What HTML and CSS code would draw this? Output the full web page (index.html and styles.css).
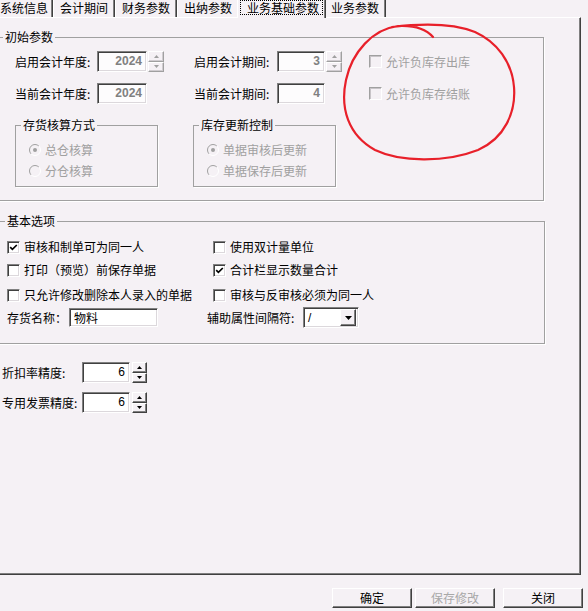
FILE: index.html
```html
<!DOCTYPE html>
<html lang="zh-CN">
<head>
<meta charset="utf-8">
<title>业务基础参数</title>
<link rel="stylesheet" href="styles.css">
</head>
<body>
<div class="tabs">
  <div class="tab first-tab">系统信息</div>
  <div class="tab">会计期间</div>
  <div class="tab">财务参数</div>
  <div class="tab">出纳参数</div>
  <div class="tab active"><span class="focus">业务基础参数</span></div>
  <div class="tab">业务参数</div>
</div>

<div class="panel">
  <div class="group g1">
    <span class="gtitle">初始参数</span>
    <div class="irow">
      <span class="lbl w-lbl1">启用会计年度:</span>
      <span class="field num w-year">2024</span>
      <span class="spin dis ml1"><span class="sb"><svg width="5" height="3" viewBox="0 0 5 3"><path d="M2.5 0L5 3H0Z"/></svg></span><span class="sb"><svg width="5" height="3" viewBox="0 0 5 3"><path d="M0 0H5L2.5 3Z"/></svg></span></span>
      <span class="lbl w-lbl2 ml30">启用会计期间:</span>
      <span class="field num w-per">3</span>
      <span class="spin dis ml1"><span class="sb"><svg width="5" height="3" viewBox="0 0 5 3"><path d="M2.5 0L5 3H0Z"/></svg></span><span class="sb"><svg width="5" height="3" viewBox="0 0 5 3"><path d="M0 0H5L2.5 3Z"/></svg></span></span>
      <span class="chk dis ml27"><span class="cb"></span>允许负库存出库</span>
    </div>
    <div class="irow">
      <span class="lbl w-lbl1">当前会计年度:</span>
      <span class="field num w-year">2024</span>
      <span class="spin-gap"></span>
      <span class="lbl w-lbl2 ml30">当前会计期间:</span>
      <span class="field num w-per">4</span>
      <span class="spin-gap"></span>
      <span class="chk dis ml27"><span class="cb"></span>允许负库存结账</span>
    </div>
    <div class="subs">
      <div class="sub">
        <span class="stitle">存货核算方式</span>
        <div class="radio"><svg class="rd" width="12" height="12" viewBox="0 0 12 12"><circle cx="6" cy="6" r="5" fill="#f5f1f5"/><path d="M2.1 9.9A5.5 5.5 0 0 1 9.9 2.1" fill="none" stroke="#a0a0a0"/><path d="M9.9 2.1A5.5 5.5 0 0 1 2.1 9.9" fill="none" stroke="#ffffff"/><circle cx="6" cy="6" r="2" fill="#a0a0a0"/></svg>总仓核算</div>
        <div class="radio"><svg class="rd" width="12" height="12" viewBox="0 0 12 12"><circle cx="6" cy="6" r="5" fill="#f5f1f5"/><path d="M2.1 9.9A5.5 5.5 0 0 1 9.9 2.1" fill="none" stroke="#a0a0a0"/><path d="M9.9 2.1A5.5 5.5 0 0 1 2.1 9.9" fill="none" stroke="#ffffff"/></svg>分仓核算</div>
      </div>
      <div class="sub">
        <span class="stitle">库存更新控制</span>
        <div class="radio"><svg class="rd" width="12" height="12" viewBox="0 0 12 12"><circle cx="6" cy="6" r="5" fill="#f5f1f5"/><path d="M2.1 9.9A5.5 5.5 0 0 1 9.9 2.1" fill="none" stroke="#a0a0a0"/><path d="M9.9 2.1A5.5 5.5 0 0 1 2.1 9.9" fill="none" stroke="#ffffff"/><circle cx="6" cy="6" r="2" fill="#a0a0a0"/></svg>单据审核后更新</div>
        <div class="radio"><svg class="rd" width="12" height="12" viewBox="0 0 12 12"><circle cx="6" cy="6" r="5" fill="#f5f1f5"/><path d="M2.1 9.9A5.5 5.5 0 0 1 9.9 2.1" fill="none" stroke="#a0a0a0"/><path d="M9.9 2.1A5.5 5.5 0 0 1 2.1 9.9" fill="none" stroke="#ffffff"/></svg>单据保存后更新</div>
      </div>
    </div>
  </div>

  <div class="group g2">
    <span class="gtitle">基本选项</span>
    <div class="crow">
      <span class="col chk"><span class="cb"><svg width="9" height="9" viewBox="0 0 9 9"><path d="M1.2 4.2L3.4 6.4L7.8 2" fill="none" stroke="#000" stroke-width="1.7"/></svg></span>审核和制单可为同一人</span>
      <span class="col chk"><span class="cb"></span>使用双计量单位</span>
    </div>
    <div class="crow r2">
      <span class="col chk"><span class="cb"></span>打印（预览）前保存单据</span>
      <span class="col chk"><span class="cb"><svg width="9" height="9" viewBox="0 0 9 9"><path d="M1.2 4.2L3.4 6.4L7.8 2" fill="none" stroke="#000" stroke-width="1.7"/></svg></span>合计栏显示数量合计</span>
    </div>
    <div class="crow r3">
      <span class="col chk"><span class="cb"></span>只允许修改删除本人录入的单据</span>
      <span class="col chk"><span class="cb"></span>审核与反审核必须为同一人</span>
    </div>
    <div class="frow">
      <span class="lbl w-name">存货名称：</span>
      <span class="field text w-namefield">物料</span>
      <span class="lbl w-sep ml49">辅助属性间隔符:</span>
      <span class="combo"><span class="combo-val">/</span><span class="drop"><svg width="7" height="4" viewBox="0 0 7 4"><path d="M0 0H7L3.5 4Z"/></svg></span></span>
    </div>
  </div>

  <div class="prow first">
    <span class="lbl w-plbl">折扣率精度:</span>
    <span class="field num en w-per">6</span>
    <span class="spin ml2"><span class="sb"><svg width="5" height="3" viewBox="0 0 5 3"><path d="M2.5 0L5 3H0Z"/></svg></span><span class="sb"><svg width="5" height="3" viewBox="0 0 5 3"><path d="M0 0H5L2.5 3Z"/></svg></span></span>
  </div>
  <div class="prow second">
    <span class="lbl w-plbl">专用发票精度:</span>
    <span class="field num en w-per">6</span>
    <span class="spin ml2"><span class="sb"><svg width="5" height="3" viewBox="0 0 5 3"><path d="M2.5 0L5 3H0Z"/></svg></span><span class="sb"><svg width="5" height="3" viewBox="0 0 5 3"><path d="M0 0H5L2.5 3Z"/></svg></span></span>
  </div>
</div>

<div class="btns">
  <span class="btn">确定</span>
  <span class="btn disabled b2">保存修改</span>
  <span class="btn b3">关闭</span>
</div>

<svg class="annot" width="588" height="611" viewBox="0 0 588 611">
  <path d="M433 37C426 29 416 25 398 26C373 29 352 52 346 80C340 108 348 135 375 150C400 162 445 163 478 150C505 138 516 112 514 87C512 62 497 42 475 32C455 24 425 23 392 27" fill="none" stroke="#e8202a" stroke-width="2.2" stroke-linecap="round"/>
</svg>
</body>
</html>
```

FILE: styles.css
```css
html, body {
  margin: 0;
  padding: 0;
}

body {
  width: 588px;
  height: 611px;
  overflow: hidden;
  position: relative;
  background: #f5f1f5;
  color: #000;
  font-family: "Noto Sans CJK SC", "Noto Sans", sans-serif;
  font-size: 12px;
  line-height: 14px;
}

/* ---------- tabs ---------- */
.tabs {
  display: flex;
  align-items: flex-end;
  height: 17px;
  margin-left: -7px;
}

.tab {
  flex: none;
  box-sizing: border-box;
  height: 17px;
  line-height: 15px;
  padding: 0 6px;
  border-left: 1px solid #fff;
  border-right: 1px solid #404040;
  box-shadow: inset -1px 0 #808080;
  white-space: nowrap;
}

.tab.first-tab {
  padding-right: 4px;
}

.tab.active {
  position: relative;
  z-index: 1;
  height: 18px;
  margin: 0 -2px -1px;
  padding: 0 2px;
  background: #f5f1f5;
}

.focus {
  display: inline-block;
  border: 1px dotted #000;
  padding: 0 3px 0 6px;
  line-height: 13px;
}

/* ---------- panel ---------- */
.panel {
  box-sizing: border-box;
  width: 583px;
  height: 558px;
  margin-left: -2px;
  padding-top: 19px;
  border-top: 1px solid #fff;
  border-right: 1px solid #404040;
  border-bottom: 1px solid #404040;
  box-shadow: inset -1px -1px #808080;
}

.group {
  position: relative;
  box-sizing: border-box;
  border: 1px solid #a0a0a0;
  box-shadow: 1px 1px 0 #fff;
}

.gtitle, .stitle {
  position: absolute;
  top: -8px;
  left: 4px;
  padding: 0 2px;
  background: #f5f1f5;
  line-height: 14px;
  white-space: nowrap;
}

.g1 {
  width: 546px;
  padding: 13px 0 13px 16px;
}

.g2 {
  width: 547px;
  margin-top: 20px;
  padding: 18px 0 15px 8px;
}

.g2 .gtitle {
  left: 6px;
}

.lbl {
  flex: none;
  white-space: nowrap;
}

.w-lbl1 { width: 82px; }
.w-lbl2 { width: 83px; }
.w-name { width: 62px; }
.w-sep { width: 96px; }
.w-plbl { width: 80px; }

.ml1 { margin-left: 1px; }
.ml2 { margin-left: 2px; }
.ml27 { margin-left: 27px; }
.ml30 { margin-left: 30px; }
.ml49 { margin-left: 49px; }

/* ---------- input rows ---------- */
.irow {
  display: flex;
  align-items: center;
  height: 21px;
}

.irow + .irow {
  margin-top: 11px;
}

.field {
  flex: none;
  box-sizing: border-box;
  height: 21px;
  border: 1px solid;
  border-color: #808080 #fff #fff #808080;
  box-shadow: inset 1px 1px #404040, inset -1px -1px #dcd8dc;
  background: #fdfcfd;
  line-height: 19px;
  white-space: nowrap;
}

.field.num {
  text-align: right;
  padding-right: 4px;
  font-family: "Liberation Sans", Arial, sans-serif;
  font-weight: bold;
  color: #808080;
}

.field.num.en {
  font-weight: normal;
  color: #000;
  background: #fff;
}

.field.text {
  height: 19px;
  line-height: 17px;
  padding-left: 4px;
  background: #fff;
}

.w-year { width: 50px; }
.w-per { width: 48px; }
.w-namefield { width: 89px; }

.spin {
  flex: none;
  display: flex;
  flex-direction: column;
  width: 16px;
  height: 21px;
}

.spin-gap {
  flex: none;
  width: 17px;
}

.sb {
  flex: 1;
  box-sizing: border-box;
  display: flex;
  align-items: center;
  justify-content: center;
  border: 1px solid;
  border-color: #fff #404040 #404040 #fff;
  box-shadow: inset -1px -1px #808080;
  fill: #000;
}

.spin.dis .sb {
  border-color: #fff #a0a0a0 #a0a0a0 #fff;
  box-shadow: inset -1px -1px #d0ccd0;
  fill: #a0a0a0;
}

/* ---------- checkboxes ---------- */
.chk {
  flex: none;
  display: flex;
  align-items: center;
  gap: 4px;
  white-space: nowrap;
  height: 14px;
}

.chk.dis {
  color: #a0a0a0;
}

.cb {
  flex: none;
  box-sizing: border-box;
  width: 13px;
  height: 13px;
  display: flex;
  align-items: center;
  justify-content: center;
  border: 1px solid;
  border-color: #808080 #fff #fff #808080;
  box-shadow: inset 1px 1px #404040, inset -1px -1px #dcd8dc;
  background: #fff;
}

.chk.dis .cb {
  border-color: #a0a0a0 #fff #fff #a0a0a0;
  box-shadow: inset 1px 1px #c8c4c8;
  background: #f5f1f5;
}

/* ---------- sub groups / radios ---------- */
.subs {
  display: flex;
  gap: 35px;
  margin-top: 21px;
}

.sub {
  position: relative;
  box-sizing: border-box;
  width: 143px;
  height: 62px;
  padding: 17px 0 0 13px;
  border: 1px solid #a0a0a0;
  box-shadow: 1px 1px 0 #fff;
}

.stitle {
  left: 5px;
}

.radio {
  display: flex;
  align-items: center;
  gap: 4px;
  height: 14px;
  color: #a0a0a0;
  white-space: nowrap;
}

.radio + .radio {
  margin-top: 7px;
}

.rd {
  flex: none;
}

/* ---------- basic options ---------- */
.crow {
  display: flex;
  align-items: center;
  height: 14px;
}

.crow.r2 { margin-top: 9px; }
.crow.r3 { margin-top: 11px; }

.col {
  width: 206px;
}

.frow {
  display: flex;
  align-items: center;
  height: 21px;
  margin-top: 5px;
}

.combo {
  flex: none;
  box-sizing: border-box;
  display: flex;
  align-items: center;
  width: 56px;
  height: 21px;
  padding: 2px;
  border: 1px solid;
  border-color: #808080 #fff #fff #808080;
  box-shadow: inset 1px 1px #404040, inset -1px -1px #dcd8dc;
  background: #fff;
}

.combo-val {
  flex: 1;
  padding-left: 2px;
  font-family: "Liberation Sans", Arial, sans-serif;
}

.drop {
  box-sizing: border-box;
  width: 16px;
  height: 17px;
  display: flex;
  align-items: center;
  justify-content: center;
  border: 1px solid;
  border-color: #fff #404040 #404040 #fff;
  box-shadow: inset -1px -1px #808080;
  background: #f5f1f5;
  fill: #000;
}

/* ---------- precision rows ---------- */
.prow {
  display: flex;
  align-items: center;
  height: 21px;
  margin-left: 4px;
}

.prow.first { margin-top: 18px; }
.prow.second { margin-top: 9px; }

.prow .spin {
  width: 15px;
}

/* ---------- buttons ---------- */
.btns {
  display: flex;
  justify-content: flex-end;
  margin-top: 13px;
  padding-right: 5px;
}

.btn {
  box-sizing: border-box;
  width: 80px;
  height: 20px;
  border: 1px solid;
  border-color: #fff #404040 #404040 #fff;
  box-shadow: inset -1px -1px #808080;
  text-align: center;
  line-height: 18px;
}

.btn.disabled {
  color: #a8a8a8;
}

.b2 { margin-left: 3px; }
.b3 { margin-left: 8px; }

/* ---------- hand-drawn annotation ---------- */
.annot {
  position: absolute;
  left: 0;
  top: 0;
  pointer-events: none;
}
```
